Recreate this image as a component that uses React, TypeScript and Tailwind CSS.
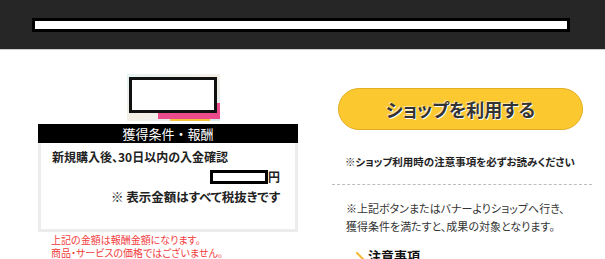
import React from 'react'

const jp = { fontFamily: '"Noto Sans CJK JP", "Noto Sans", sans-serif' }

function Header() {
  return (
    <header className="h-[50px] border-b border-[#cfcfcf] bg-[#262626] pl-[32px] pt-[18px]">
      <div className="h-[14px] w-[538px] border-[3px] border-black bg-white" />
    </header>
  )
}

function Thumb() {
  return (
    <div className="relative ml-[89px] h-[47px] w-[93px] bg-gradient-to-br from-[#e6f3f3] via-[#f4efe6] to-[#dcecee]">
      <div className="absolute bottom-[2px] right-0 h-[16px] w-[62px] bg-[#ec4c8c]" />
      <div className="absolute bottom-0 right-[10px] h-[2px] w-[40px] bg-[#f6c43a]" />
      <div className="absolute left-[2px] top-[3px] h-[36px] w-[88px] border-[3px] border-[#111] bg-white" />
    </div>
  )
}

function Reward() {
  return (
    <div className="w-[260px]">
      <Thumb />
      <div className="mt-[3px] flex h-[19px] items-center justify-center bg-black text-[13px] leading-none text-white [font-feature-settings:normal]">
        獲得条件・報酬
      </div>
      <div className="h-[89px] border-[3px] border-t-0 border-[#ececec] px-[11px] pt-[6px]">
        <p className="text-[12px] font-bold leading-[16px] text-[#222]">新規購入後、30日以内の入金確認</p>
        <div className="mt-[5px] flex items-center justify-end pr-[4px]">
          <div className="h-[14px] w-[58px] border-[3px] border-black bg-white" />
          <span className="text-[12px] font-bold leading-[14px] text-[#222]">円</span>
        </div>
        <p className="mt-[4px] pr-[4px] text-right text-[12.5px] font-bold leading-[18px] text-[#222]">
          ※ 表示金額はすべて税抜きです
        </p>
      </div>
      <div className="pl-[13px] pt-[1px] text-[10px] leading-[13px] text-[#f23c3c]">
        <p>上記の金額は報酬金額になります。</p>
        <p>商品・サービスの価格ではございません。</p>
      </div>
    </div>
  )
}

function Shop() {
  return (
    <div className="w-[260px] pt-[14px]">
      <button className="ml-[6px] flex h-[42px] w-[245px] items-center justify-center rounded-full border border-[#e2ae22] bg-[#fcc82f] text-[18px] font-bold text-[#333] [text-shadow:1px_1px_0_#fff,-1px_-1px_0_#fff8]">
        ショップを利用する
      </button>
      <p className="mt-[25px] pl-[13px] text-[10.5px] font-bold leading-[14px] text-[#222]">
        ※ショップ利用時の注意事項を必ずお読みください
      </p>
      <div className="mt-[15px] border-t border-dashed border-[#bdbdbd]" />
      <div className="pl-[14px] pt-[14px] text-[11px] leading-[18px] text-[#333]">
        <p>※上記ボタンまたはバナーよりショップへ行き、</p>
        <p>獲得条件を満たすと、成果の対象となります。</p>
      </div>
      <div className="mt-[13px] flex items-center gap-[3px] pl-[24px]">
        <svg width="9" height="9" viewBox="0 0 9 9">
          <path d="M1 1 L8 8" stroke="#f5b82e" strokeWidth="2" strokeLinecap="round" />
        </svg>
        <span className="text-[13px] font-bold leading-[16px] text-[#111]">注意事項</span>
      </div>
    </div>
  )
}

export default function App() {
  return (
    <div className="h-[259px] overflow-hidden bg-white [font-feature-settings:'palt']" style={jp}>
      <Header />
      <main className="flex gap-[34px] pl-[38px] pt-[24px]">
        <Reward />
        <Shop />
      </main>
    </div>
  )
}
